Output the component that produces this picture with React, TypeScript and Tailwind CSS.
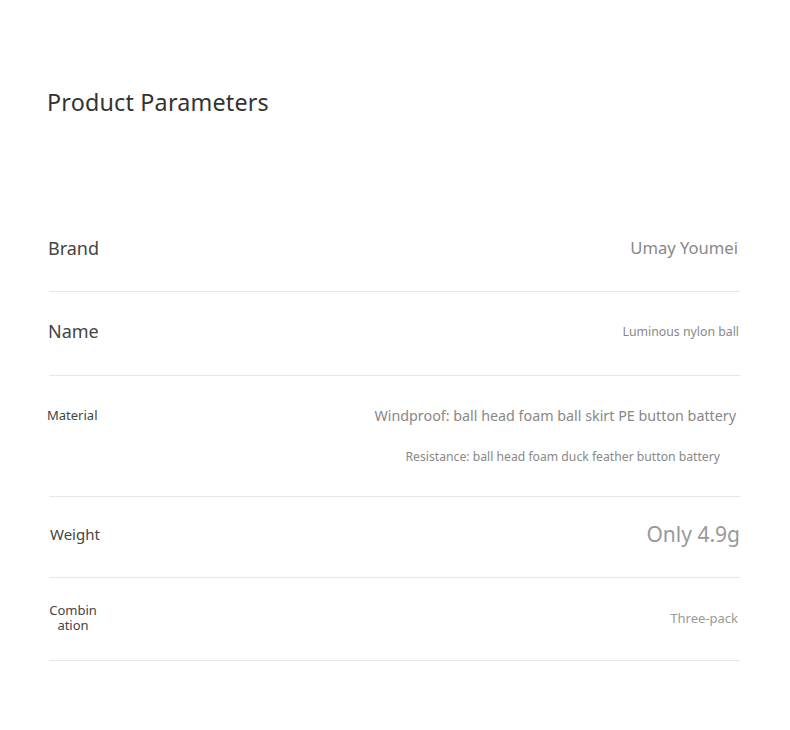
export default function App() {
  return (
    <div className="min-h-screen bg-white font-['Noto_Sans',sans-serif] text-[#333]">
      <div className="pl-[47px] pr-[50px] pt-[86px]">
        {/* Title */}
        <h1 className="text-[23.3px] leading-[32px] text-[#333] tracking-[0.2px]">Product Parameters</h1>

        <div className="mt-[88px] ml-[2px]">
          {/* Brand */}
          <div className="flex h-[86px] items-center justify-between border-b border-[#e6e6e6]">
            <span className="-ml-[1px] text-[18px] text-[#444]">Brand</span>
            <span className="mr-[2px] text-[16.6px] text-[#888]">Umay Youmei</span>
          </div>

          {/* Name */}
          <div className="flex h-[84px] items-center justify-between border-b border-[#e6e6e6]">
            <span className="-ml-[1px] -mt-[4px] text-[18px] text-[#444]">Name</span>
            <span className="mr-[1px] -mt-[2px] text-[12.3px] text-[#888]">Luminous nylon ball</span>
          </div>

          {/* Material */}
          <div className="flex h-[121px] justify-between border-b border-[#e6e6e6]">
            <span className="-ml-[2px] pt-[29px] text-[13px] leading-[20px] text-[#444]">Material</span>
            <div className="flex flex-col items-end pt-[29px]">
              <span className="mr-[4px] text-[14.3px] leading-[22px] text-[#888]">
                Windproof: ball head foam ball skirt PE button battery
              </span>
              <span className="mr-[20px] mt-[22px] text-[12.2px] leading-[16px] text-[#888]">
                Resistance: ball head foam duck feather button battery
              </span>
            </div>
          </div>

          {/* Weight */}
          <div className="flex h-[81px] items-center justify-between border-b border-[#e6e6e6]">
            <span className="ml-[1px] -mt-[6px] text-[15px] text-[#444]">Weight</span>
            <span className="-mt-[5px] text-[21px] text-[#999]">Only 4.9g</span>
          </div>

          {/* Combination */}
          <div className="flex h-[83px] items-center justify-between border-b border-[#e6e6e6]">
            <span className="-mt-[2px] w-[48px] break-all text-center text-[13px] leading-[15px] text-[#444]">Combination</span>
            <span className="mr-[2px] -mt-[1px] text-[13px] text-[#999]">Three-pack</span>
          </div>
        </div>
      </div>
    </div>
  );
}
